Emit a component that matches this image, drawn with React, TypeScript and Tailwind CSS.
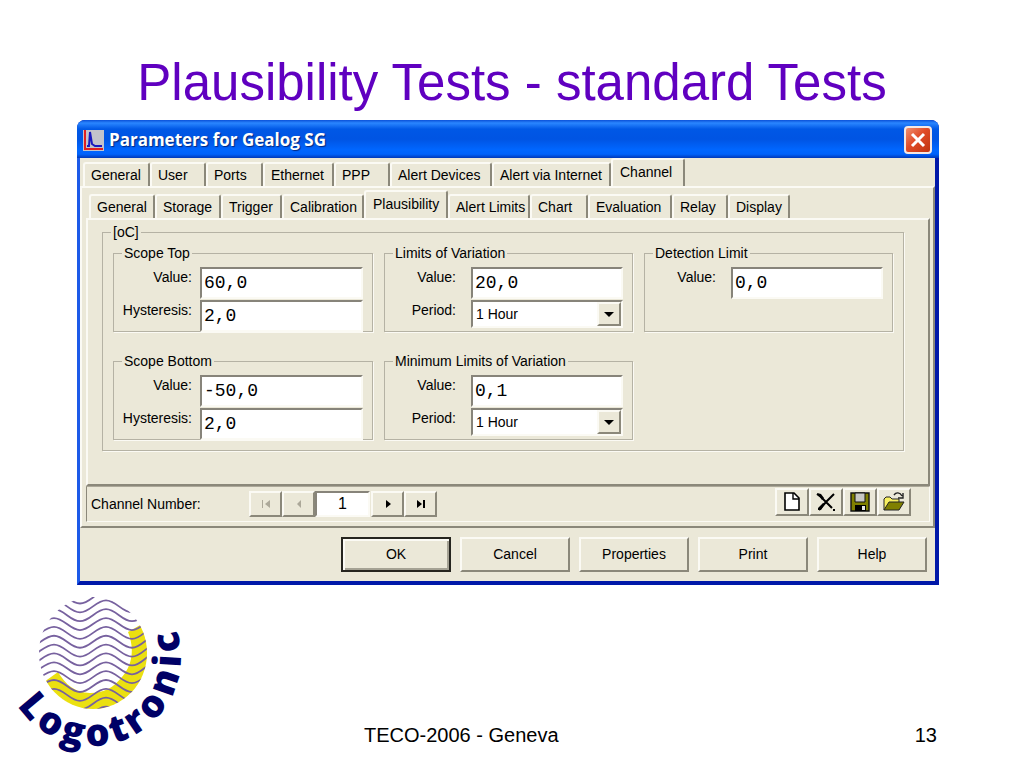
import { useId, useState } from 'react'
import type { ReactNode } from 'react'
import clsx from 'clsx'

interface Tab {
  label: string
  width: string
}

const mainTabs: Tab[] = [
  { label: 'General', width: 'w-[67px]' },
  { label: 'User', width: 'w-[56px]' },
  { label: 'Ports', width: 'w-[57px]' },
  { label: 'Ethernet', width: 'w-[71px]' },
  { label: 'PPP', width: 'w-[56px]' },
  { label: 'Alert Devices', width: 'w-[102px]' },
  { label: 'Alert via Internet', width: 'w-[119px]' },
  { label: 'Channel', width: 'w-[74px]' },
]

const channelTabs: Tab[] = [
  { label: 'General', width: 'w-[66px]' },
  { label: 'Storage', width: 'w-[66px]' },
  { label: 'Trigger', width: 'w-[61px]' },
  { label: 'Calibration', width: 'w-[82px]' },
  { label: 'Plausibility', width: 'w-[84px]' },
  { label: 'Alert Limits', width: 'w-[82px]' },
  { label: 'Chart', width: 'w-[58px]' },
  { label: 'Evaluation', width: 'w-[84px]' },
  { label: 'Relay', width: 'w-[56px]' },
  { label: 'Display', width: 'w-[62px]' },
]

const raised = 'border-2 border-t-[#fbfaf4] border-l-[#fbfaf4] border-r-[#8b887a] border-b-[#8b887a] bg-[#ebe8d8]'
const sunken = 'border-2 border-t-[#87847a] border-l-[#87847a] border-r-[#fbfaf4] border-b-[#fbfaf4] bg-white'

function TabRow({ name, tabs, initial }: { name: string; tabs: Tab[]; initial: string }) {
  const [active, setActive] = useState(initial)
  return (
    <div role="tablist" aria-label={name} className="flex h-7 items-end">
      {tabs.map((tab) => (
        <button
          key={tab.label}
          role="tab"
          aria-selected={tab.label === active}
          onClick={() => setActive(tab.label)}
          className={clsx(
            'shrink-0 whitespace-nowrap rounded-t-[3px] border-2 border-b-0 border-t-[#fbfaf4] border-l-[#fbfaf4] border-r-[#8b887a] text-left',
            tab.width,
            tab.label === active ? 'h-7 pb-[2px] pl-[7px]' : 'h-6 pl-[6px]',
          )}
        >
          {tab.label}
        </button>
      ))}
    </div>
  )
}

function Group({ title, children }: { title: string; children: ReactNode }) {
  return (
    <fieldset className="h-[87px] min-w-0 border border-[#b5b2a4] shadow-[1px_1px_0_#fbfaf4]">
      <legend className="ml-2 bg-[#ebe8d8] px-[2px] leading-4">{title}</legend>
      <div className="flex flex-col gap-px pt-[6px] pr-[9px]">{children}</div>
    </fieldset>
  )
}

function Row({ label, value, wide }: { label: string; value: string; wide?: boolean }) {
  const id = useId()
  return (
    <div className="flex">
      <label htmlFor={id} className={clsx('w-[86px] shrink-0 text-right leading-5', wide ? 'pr-[8px]' : 'pr-[15px]')}>
        {label}
      </label>
      <input
        id={id}
        defaultValue={value}
        className={clsx('h-8 w-0 flex-1 pl-[2px] font-["Liberation_Mono",monospace] text-[18px] outline-none', sunken)}
      />
    </div>
  )
}

function PeriodRow() {
  const id = useId()
  return (
    <div className="flex">
      <label htmlFor={id} className="w-[86px] shrink-0 pr-[15px] text-right leading-5">
        Period:
      </label>
      <div className="relative flex-1">
        <select id={id} className={clsx('h-7 w-full appearance-none pl-[3px] outline-none', sunken)}>
          <option>1 Hour</option>
          <option>1 Day</option>
        </select>
        <span className={clsx('pointer-events-none absolute top-[2px] right-[2px] flex h-6 w-6 items-center justify-center', raised)}>
          <svg width="10" height="5" viewBox="0 0 10 5" aria-hidden="true">
            <path d="M0 0h10L5 5z" fill="#000" />
          </svg>
        </span>
      </div>
    </div>
  )
}

function NavButton({ label, disabled, children }: { label: string; disabled?: boolean; children: ReactNode }) {
  return (
    <button
      aria-label={label}
      disabled={disabled}
      className={clsx('flex h-[26px] w-[33px] items-center justify-center', raised, disabled ? 'text-[#aca899]' : 'text-black')}
    >
      <svg width="14" height="10" viewBox="0 0 14 10" fill="currentColor" aria-hidden="true">
        {children}
      </svg>
    </button>
  )
}

function ToolButton({ label, children }: { label: string; children: ReactNode }) {
  return (
    <button aria-label={label} className={clsx('flex h-7 w-[34px] items-center justify-center', raised)}>
      <svg width="24" height="22" viewBox="0 0 24 22" aria-hidden="true">
        {children}
      </svg>
    </button>
  )
}

function DialogButton({ children, primary }: { children: ReactNode; primary?: boolean }) {
  return (
    <button
      className={clsx(
        'h-[35px] w-[110px]',
        primary
          ? 'border-2 border-[#26251f] bg-[#ebe8d8] shadow-[inset_2px_2px_0_#fbfaf4,inset_-2px_-2px_0_#a5a294]'
          : raised,
      )}
    >
      {children}
    </button>
  )
}

// one entry per letter: position on the ring around the disc, in degrees
const ringLetters: [string, number][] = [
  ['L', 140],
  ['o', 122],
  ['g', 104],
  ['o', 86],
  ['t', 70],
  ['r', 56],
  ['o', 39],
  ['n', 19],
  ['i', 3],
  ['c', -11],
]

function Logo() {
  const waves = Array.from({ length: 15 }, (_, i) => 590.5 + i * 8.85)
  return (
    <svg width="220" height="170" viewBox="0 590 220 170" role="img" aria-label="Logotronic" className="shrink-0 overflow-visible">
      <clipPath id="disc">
        <ellipse cx="93" cy="653" rx="54" ry="56" />
      </clipPath>
      <g clipPath="url(#disc)">
        <path
          d="M142 624L128 632C135 649 132 666 122 677C113 688 104 693 90 693C75 693 65 684 58 672L44 682L30 700V720H160V624Z"
          fill="#ebe010"
        />
        <g fill="none" stroke="#77619f" strokeWidth="1.8">
          {waves.map((y) => (
            <path key={y} d={`M27 ${y + 13}C37 ${y + 13} 44 ${y + 1} 54 ${y + 1}S70 ${y + 13} 80 ${y + 13}S96 ${y + 1} 106 ${y + 1}S122 ${y + 13} 132 ${y + 13}S148 ${y} 158 ${y}`} />
          ))}
        </g>
      </g>
      <g fill="#000066" textAnchor="middle" className='font-["Open_Sans",sans-serif] text-[38px] font-extrabold'>
        {ringLetters.map(([letter, angle]) => (
          <text key={angle} x="92" y="746" transform={`rotate(${angle - 90} 92 657)`}>
            {letter}
          </text>
        ))}
      </g>
    </svg>
  )
}

export default function App() {
  const [channel, setChannel] = useState('1')

  return (
    <main className='min-h-screen bg-white font-["Liberation_Sans",Arial,sans-serif] text-black'>
      <h1 className="pt-[53px] pb-[7px] text-center text-[51px] leading-[60px] text-[#6000c0]">
        Plausibility Tests - standard Tests
      </h1>

      <section className="mr-[85px] ml-[77px] rounded-t-lg bg-[#0018a8] text-[14px]">
        <header className="flex h-[38px] items-center rounded-t-lg bg-[linear-gradient(#0a50d8,#2a86ff_8%,#0058e6_24%,#0054e3_50%,#0066ff_78%,#0062fa_90%,#0038b8)] pt-[2px] pr-[7px] pl-[6px]">
          <svg width="21" height="21" viewBox="0 0 21 21" aria-hidden="true">
            <path d="M0 0h21v21H0z" fill="#c3c3cb" />
            <path d="M2 0v19h18" fill="none" stroke="#e02020" strokeWidth="2" />
            <path d="M4 16h2L7 2l2 12 3 2h7" fill="none" stroke="#1a1ac0" strokeWidth="2" />
          </svg>
          <h2 className='pl-[5px] font-["Open_Sans",sans-serif] text-[17px] font-bold text-white [text-shadow:1px_1px_1px_#002880]'>
            Parameters for Gealog SG
          </h2>
          <button
            aria-label="Close"
            className="ml-auto flex h-7 w-7 items-center justify-center rounded-[4px] border-2 border-[#f4e8e4] bg-[linear-gradient(135deg,#f09070,#e04c28_45%,#c03410)]"
          >
            <svg width="16" height="16" viewBox="0 0 16 16" aria-hidden="true">
              <path d="M2 2l12 12M14 2L2 14" stroke="#fff" strokeWidth="3" />
            </svg>
          </button>
        </header>

        <div className="border-r-4 border-b-4 border-l-[3px] border-r-[#0018a8] border-b-[#0018a8] border-l-[#1c5ae8] bg-[#ebe8d8]">
          <div className="pl-[3px]">
            <TabRow name="Parameters" tabs={mainTabs} initial="Channel" />
          </div>

          <div className="border-2 border-t-[#fbfaf4] border-r-[#8b887a] border-b-[#8b887a] border-l-[#fbfaf4] pt-[2px] pr-[3px] pb-1 pl-1">
            <div className="pl-[3px]">
              <TabRow name="Channel" tabs={channelTabs} initial="Plausibility" />
            </div>

            <div className="border-2 border-t-[#fbfaf4] border-r-[#8b887a] border-b-[#8b887a] border-l-[#fbfaf4] pt-1 pr-6 pb-[33px] pl-[14px]">
              <fieldset className="min-w-0 border border-[#b5b2a4] shadow-[1px_1px_0_#fbfaf4]">
                <legend className="ml-2 bg-[#ebe8d8] px-[2px] leading-4">[oC]</legend>
                <div className="grid grid-cols-[260fr_249fr_249fr] gap-x-[11px] gap-y-[21px] px-[10px] pt-[5px] pb-[10px]">
                  <Group title="Scope Top">
                    <Row label="Value:" value="60,0" wide />
                    <Row label="Hysteresis:" value="2,0" wide />
                  </Group>
                  <Group title="Limits of Variation">
                    <Row label="Value:" value="20,0" />
                    <PeriodRow />
                  </Group>
                  <Group title="Detection Limit">
                    <Row label="Value:" value="0,0" />
                  </Group>
                  <Group title="Scope Bottom">
                    <Row label="Value:" value="-50,0" wide />
                    <Row label="Hysteresis:" value="2,0" wide />
                  </Group>
                  <Group title="Minimum Limits of Variation">
                    <Row label="Value:" value="0,1" />
                    <PeriodRow />
                  </Group>
                </div>
              </fieldset>
            </div>

            <div className="flex h-9 items-center border border-t-[#aca899] border-r-[#fbfaf4] border-b-[#fbfaf4] border-l-[#8b887a] pr-[18px] pl-1">
              <label htmlFor="channel" className="w-[158px]">
                Channel Number:
              </label>
              <NavButton label="First channel" disabled>
                <path d="M3 1h1v8H3zM11 1v8L6 5z" />
              </NavButton>
              <NavButton label="Previous channel" disabled>
                <path d="M9 1v8L5 5z" />
              </NavButton>
              <input
                id="channel"
                value={channel}
                onChange={(e) => setChannel(e.target.value)}
                className={clsx('mr-px h-[26px] w-[55px] text-center text-[16px] outline-none', sunken)}
              />
              <NavButton label="Next channel">
                <path d="M5 1v8l5-4z" />
              </NavButton>
              <NavButton label="Last channel">
                <path d="M3 1v8l5-4zM9 1h2v8H9z" />
              </NavButton>

              <div className="ml-auto flex pb-1">
                <ToolButton label="New">
                  <path d="M5 2h9l5 5v12H5z" fill="#fff" stroke="#000" strokeWidth="1.6" />
                  <path d="M13 2v6h6" fill="none" stroke="#000" strokeWidth="1.4" />
                </ToolButton>
                <ToolButton label="Delete">
                  <path d="M3 3l4 3 5 5 6 6M20 3l-8 8-7 8" fill="none" stroke="#000" strokeWidth="2" />
                  <path d="M3 2l4 1 3 4-2 2zM4 17l5-5 2 1-4 6H4zM19 18h2v2h-2z" fill="#000" />
                </ToolButton>
                <ToolButton label="Save">
                  <path d="M3 2h18v18H3z" fill="#808000" stroke="#111" strokeWidth="1.4" />
                  <path d="M7 2h10v9H7z" fill="#c8c8c4" stroke="#111" />
                  <path d="M7 14h11v6H7z" fill="#000" />
                  <path d="M14 15h3v4h-3z" fill="#e8e8e8" />
                </ToolButton>
                <ToolButton label="Open">
                  <path d="M2 19V8l2-2h4l2 2h7v3" fill="#f8f060" stroke="#222" />
                  <path d="M2 19l5-8h15l-5 8z" fill="#808000" stroke="#222" />
                  <path d="M12 4c2-3 6-3 8 1M21 2v5h-5" fill="none" stroke="#222" strokeWidth="1.4" />
                </ToolButton>
              </div>
            </div>
          </div>

          <div className="flex justify-end gap-[9px] pt-[9px] pr-2 pb-[9px]">
            <DialogButton primary>OK</DialogButton>
            <DialogButton>Cancel</DialogButton>
            <DialogButton>Properties</DialogButton>
            <DialogButton>Print</DialogButton>
            <DialogButton>Help</DialogButton>
          </div>
        </div>
      </section>

      <footer className="flex items-end pt-[5px] text-[20px] leading-6">
        <Logo />
        <p className="pb-[13px] pl-36">TECO-2006 - Geneva</p>
        <p className="ml-auto pr-[87px] pb-[13px]">13</p>
      </footer>
    </main>
  )
}
